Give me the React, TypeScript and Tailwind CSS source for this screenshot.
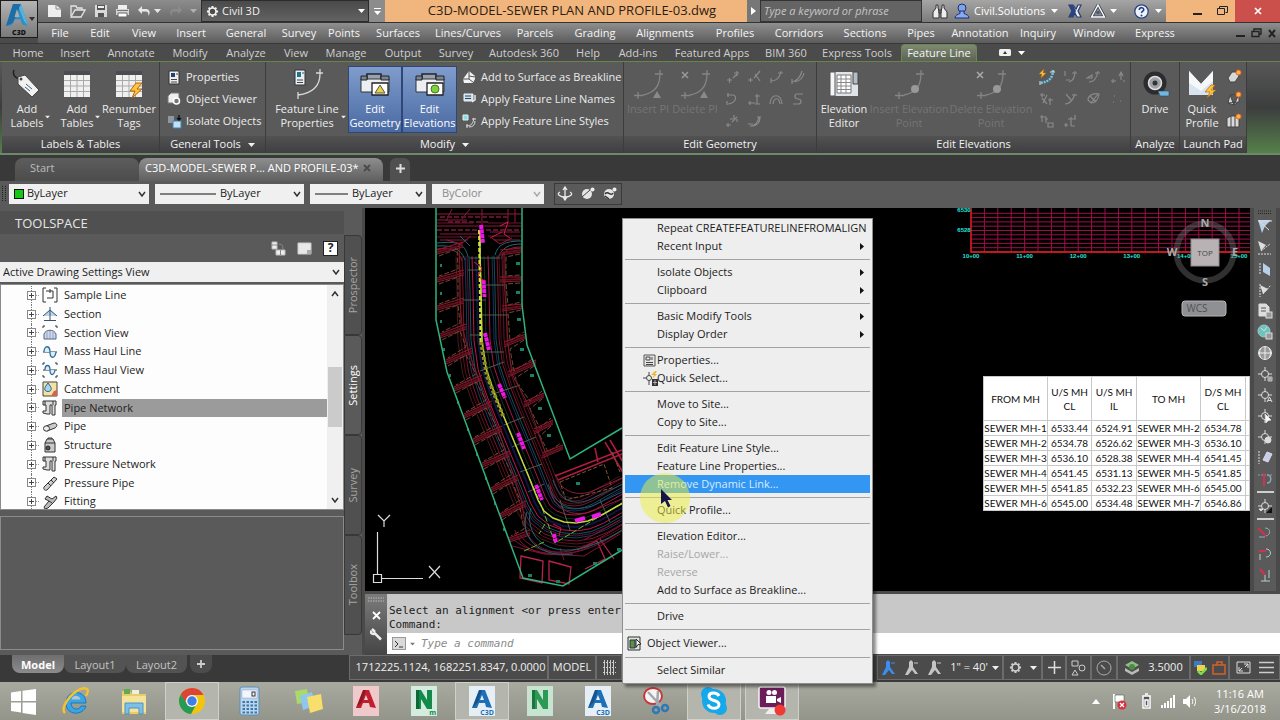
import type { ReactNode } from 'react';

type Pt = [number, number];

function Svg({ w, h, vb, className, children }: { w: number; h: number; vb?: string; className?: string; children: ReactNode }) {
  return (
    <svg width={w} height={h} viewBox={vb ?? `0 0 ${w} ${h}`} fill="none" className={`shrink-0 ${className ?? ''}`} aria-hidden="true">
      {children}
    </svg>
  );
}

function Down({ className }: { className?: string }) {
  return (
    <Svg w={7} h={4} className={className}>
      <path d="M0 0h7L3.500 4z" fill="currentColor" />
    </Svg>
  );
}

/* ---------- Title bar and menus ---------- */

function AppLogo() {
  return (
    <button aria-label="Application menu" className="relative h-[38px] w-[38px] shrink-0 border border-[#1c1c1c] bg-gradient-to-b from-[#b4b4b4] to-[#7a7a7a]">
      <Svg w={36} h={36}>
        <path d="M5 25 12 3h8l7 22-6-1.500-1.500-5h-7l-2 6z" fill="#2f8fc6" />
        <path d="M12 3h8l-2 5-6 14-7 3z" fill="#1f6da6" />
        <path d="M16 8l2.500 8h-5z" fill="#a9adb0" />
        <path d="M20 3l7 22-4-5-5-13z" fill="#56b4dc" />
        <path d="M28 16h6l-3 4z" fill="#402a2a" />
        <text x="18" y="34" textAnchor="middle" fontSize="7" fontWeight="800" fontFamily="Open Sans" fill="#111">C3D</text>
      </Svg>
    </button>
  );
}

function QuickAccess() {
  return (
    <div className="flex w-[163px] shrink-0 items-center justify-between pl-[9px] pr-1 text-[#e8e8e8]">
      <button aria-label="New"><Svg w={15} h={14}><path d="M1 1h8l5 4v8H1z" fill="#eee" /><path d="M9 1v4h5" stroke="#888" /></Svg></button>
      <button aria-label="Open"><Svg w={17} h={14}><path d="M2 12V2h5l1 2h5v3" stroke="#e5e5e5" strokeWidth="1.300" /><path d="M2 13 6 6h10l-4 7z" fill="#6c6c6c" stroke="#e5e5e5" strokeWidth="1.300" /></Svg></button>
      <button aria-label="Save"><Svg w={14} h={14}><path d="M1 1h12v12H1z" fill="#d9d9d9" /><path d="M3 1h8v5H3zM4 9h6v4H4z" fill="#555" /><path d="M4 2h6v2H4z" fill="#eee" /></Svg></button>
      <button aria-label="Plot"><Svg w={15} h={14}><path d="M3 1h9v4H3z" fill="#eee" /><path d="M1 5h13v6H1z" fill="#d5d5d5" /><path d="M3 9h9v4H3z" fill="#fff" stroke="#666" /><path d="M2 6.500h11" stroke="#777" /></Svg></button>
      <button aria-label="Undo"><Svg w={14} h={12}><path d="M5 1 1 5l4 4V6.500h4c2 0 2.500 1.500 2.500 4.500 2-3 1.500-7-2.500-7H5z" fill="#e8e8e8" /></Svg></button>
      <Down className="-ml-1" />
      <button aria-label="Redo"><Svg w={14} h={12}><path d="M9 1l4 4-4 4V6.500H5c-2 0-2.500 1.500-2.500 4.500-2-3-1.500-7 2.500-7h4z" fill="#8c8c8c" /></Svg></button>
      <Down className="text-[#b0b0b0]" />
    </div>
  );
}

function GearIcon({ size, color }: { size: number; color: string }) {
  return (
    <Svg w={size} h={size} vb="0 0 14 14">
      <path d="M7 1v12M1 7h12M2.800 2.800l8.400 8.400M11.200 2.800l-8.400 8.400" stroke={color} strokeWidth="2.200" />
      <circle cx="7" cy="7" r="3.800" fill="#4c4c4c" stroke={color} strokeWidth="1.800" />
    </Svg>
  );
}

function TitleBar() {
  return (
    <div className="flex h-[23px] items-stretch border-b border-[#333] bg-gradient-to-b from-[#8d8d8d] to-[#6a6a6a]">
      <QuickAccess />
      <div className="relative flex w-[168px] shrink-0 items-center border border-[#2c2c2c] bg-gradient-to-b from-[#4a4a4a] to-[#626262] text-white">
        <div className="pointer-events-none absolute left-1"><GearIcon size={13} color="#f2f2f2" /></div>
        <select aria-label="Workspace" className="h-full w-full appearance-none bg-transparent pl-5 text-[11px] text-[#f0f0f0]"><option>Civil 3D</option></select>
        <Down className="pointer-events-none absolute right-[3px]" />
      </div>
      <button aria-label="Customize" className="flex w-4 shrink-0 flex-col items-center justify-center gap-[2px] bg-[#8c8c8c] text-white"><span className="h-px w-[7px] bg-white" /><Down /></button>
      <h1 className="flex min-w-0 flex-1 items-center justify-center whitespace-nowrap bg-[#f1b57e] pl-3 text-[13px] text-[#2c1d10]">C3D-MODEL-SEWER PLAN AND PROFILE-03.dwg</h1>
      <button aria-label="Collapse search" className="flex w-[13px] shrink-0 items-center justify-center bg-[#777]"><Svg w={5} h={8}><path d="M0 0l5 4-5 4z" fill="#fff" /></Svg></button>
      <input aria-label="Search" placeholder="Type a keyword or phrase" className="w-[162px] shrink-0 border border-[#333] bg-[#646464] pl-[3px] text-[11px] italic text-[#c9c9c9] placeholder:text-[#c4c4c4]" />
      <div className="flex w-[244px] shrink-0 items-center bg-gradient-to-b from-[#a5a5a5] to-[#7b7b7b] pl-[10px] text-[11px] text-white">
        <button aria-label="Find"><Svg w={16} h={15}><path d="M4 1h2v3l1 3v7H1V8l3-4zM10 1h2v3l3 4v6H9V7l1-3zM7 6h2v3H7z" fill="#eee" stroke="#333" /></Svg></button>
        <button className="ml-[6px] flex items-center gap-1">
          <Svg w={16} h={16}><circle cx="8" cy="5" r="4" fill="#7ea4e8" stroke="#1a3379" /><path d="M1 15c0-3 3-3.500 5-4.500V8h4v2.500c2 1 5 1.500 5 4.500z" fill="#88aaf0" stroke="#1a3379" /></Svg>
          Civil.Solutions
        </button>
        <Down className="ml-[6px]" />
        <button aria-label="Exchange" className="ml-[10px]"><Svg w={14} h={14}><path d="M1 1h4l3 4 2-4h3l-3 6 3 6H9L7 9l-2 4H1l3-6z" fill="#e9edf6" stroke="#2a3d70" strokeWidth="1.200" /><path d="M1 1h4l3 6-3 6H1l3-6z" fill="#2b4382" /></Svg></button>
        <button aria-label="Stay connected" className="ml-2"><Svg w={16} h={14}><path d="M8 1l6.500 12h-13z" stroke="#3d4659" strokeWidth="3" /><path d="M8 1l6.500 12h-13z" stroke="#fff" strokeWidth="1.400" /><circle cx="8" cy="8.500" r="1.800" fill="#4b5870" /></Svg></button>
        <Down className="ml-1" />
        <button aria-label="Help" className="ml-[17px]"><Svg w={15} h={15}><circle cx="7.500" cy="7.500" r="6.700" fill="#eef2fb" stroke="#2b447f" strokeWidth="1.300" /><path d="M5.300 6c0-3.200 4.800-3 4.400 0-.2 1.200-2.200 1.400-2.200 3" stroke="#223f8c" strokeWidth="1.600" /><circle cx="7.500" cy="11.500" r="1" fill="#223f8c" /></Svg></button>
        <Down className="ml-[6px]" />
      </div>
      <div className="flex w-[69px] shrink-0 items-center justify-end gap-[15px] bg-[#f1b57e] pr-[7px]">
        <button aria-label="Minimize"><Svg w={9} h={10}><path d="M0 8h9" stroke="#222" strokeWidth="2" /></Svg></button>
        <button aria-label="Restore"><Svg w={11} h={10}><path d="M2.500 2.500V.5h8v6h-2M.5 2.500h7v6h-7z" stroke="#222" /></Svg></button>
      </div>
      <button aria-label="Close" className="flex w-[45px] shrink-0 items-center justify-center bg-[#cb504c]"><Svg w={8} h={8}><path d="M1 1l6 6M7 1L1 7" stroke="#fff" strokeWidth="1.600" /></Svg></button>
    </div>
  );
}

const menus: [string, string][] = [
  ['File', 'w-[40px]'], ['Edit', 'w-[40px]'], ['View', 'w-[48px]'], ['Insert', 'w-[46px]'], ['General', 'w-[64px]'],
  ['Survey', 'w-[42px]'], ['Points', 'w-[48px]'], ['Surfaces', 'w-[60px]'], ['Lines/Curves', 'w-[80px]'], ['Parcels', 'w-[54px]'],
  ['Grading', 'w-[66px]'], ['Alignments', 'w-[74px]'], ['Profiles', 'w-[66px]'], ['Corridors', 'w-[62px]'], ['Sections', 'w-[70px]'],
  ['Pipes', 'w-[42px]'], ['Annotation', 'w-[76px]'], ['Inquiry', 'w-[40px]'], ['Window', 'w-[72px]'], ['Express', 'w-[50px]'],
];

function MenuBar() {
  return (
    <nav className="flex h-[20px] items-center bg-gradient-to-b from-[#8f8f8f] to-[#5c5c5c] pl-[2px] text-[11px] leading-4 text-[#f4f4f4]">
      {menus.map(([label, w]) => (
        <button key={label} className={`${w} shrink-0 whitespace-nowrap text-center`}>{label}</button>
      ))}
      <div className="ml-auto flex items-center gap-[6px] pr-1 text-[#222]">
        <button aria-label="Minimize drawing"><Svg w={9} h={9}><path d="M0 7h9" stroke="#222" strokeWidth="2" /></Svg></button>
        <button aria-label="Restore drawing"><Svg w={11} h={10}><path d="M3 3V1h7v5H8M1 3.500h7v5H1z" stroke="#222" strokeWidth="1.400" /></Svg></button>
        <button aria-label="Close drawing"><Svg w={8} h={9}><path d="M1 1l6 7M7 1L1 8" stroke="#222" strokeWidth="2" /></Svg></button>
      </div>
    </nav>
  );
}

const tabs: [string, string][] = [
  ['Home', 'w-[40px]'], ['Insert', 'w-[54px]'], ['Annotate', 'w-[58px]'], ['Modify', 'w-[60px]'], ['Analyze', 'w-[52px]'],
  ['View', 'w-[48px]'], ['Manage', 'w-[52px]'], ['Output', 'w-[62px]'], ['Survey', 'w-[44px]'], ['Autodesk 360', 'w-[92px]'],
  ['Help', 'w-[36px]'], ['Add-ins', 'w-[64px]'], ['Featured Apps', 'w-[84px]'], ['BIM 360', 'w-[64px]'], ['Express Tools', 'w-[78px]'],
];

function RibbonTabs() {
  return (
    <div className="flex h-[19px] items-stretch border-b border-[#67854b] border-t border-t-[#383838] bg-[#4b4b4b] pl-2 text-[11px] leading-4 text-[#cfcfcf]">
      {tabs.map(([label, w]) => (
        <button key={label} className={`${w} shrink-0 whitespace-nowrap text-center`}>{label}</button>
      ))}
      <button className="ml-[5px] w-[76px] shrink-0 whitespace-nowrap rounded-t-sm border border-b-0 border-[#6d8456] bg-gradient-to-b from-[#7d8a70] to-[#5d6357] text-center text-[#f4f4f4]">Feature Line</button>
      <button aria-label="Minimize ribbon" className="ml-[22px] flex items-center gap-[7px] text-white">
        <Svg w={12} h={7}><rect width="12" height="7" rx="1.500" fill="#f0f0f0" /><path d="M4 5l2-3 2 3z" fill="#333" /></Svg>
        <Down />
      </button>
    </div>
  );
}

/* ---------- Ribbon ---------- */

function Big({ icon, l1, l2, w, on, off, arrow }: { icon: ReactNode; l1: string; l2?: string; w: string; on?: boolean; off?: boolean; arrow?: boolean }) {
  return (
    <button
      disabled={off}
      className={`${w} relative flex h-[67px] shrink-0 flex-col items-center whitespace-nowrap border pt-px text-[11px] leading-[14px] ${on ? 'border-[#2e4778] bg-gradient-to-b from-[#7f9ccb] to-[#4a6aa3] text-white' : off ? 'border-transparent text-[#757575]' : 'border-transparent text-[#ececec]'}`}
    >
      <span className="mb-[2px] flex h-8 items-center justify-center">{icon}</span>
      <span>{l1}</span>
      <span>{l2}</span>
      {arrow && <Down className="absolute bottom-[13px] right-0 scale-75" />}
    </button>
  );
}

function Row({ icon, children }: { icon: ReactNode; children: ReactNode }) {
  return (
    <button className="flex h-[22px] items-center gap-[3px] whitespace-nowrap text-[11px] text-[#ececec]">
      <span className="flex w-[18px] justify-center">{icon}</span>
      {children}
    </button>
  );
}

function Panel({ title, w, arrow, children }: { title: string; w: string; arrow?: boolean; children: ReactNode }) {
  return (
    <section className={`${w} flex shrink-0 flex-col border-r border-[#3c3c3c] bg-[#5a5a5a] pt-1`}>
      <div className="flex h-[70px]">{children}</div>
      <div className="flex h-[17px] items-center justify-center gap-[7px] whitespace-nowrap bg-gradient-to-b from-[#525252] to-[#3f3f42] text-[11px] text-[#f2f2f2]">
        {title}
        {arrow && <Down />}
      </div>
    </section>
  );
}

const TagIcon = (
  <Svg w={30} h={30}>
    <path d="M2 1c-2 5 2 9 6 8" stroke="#222" strokeWidth="1.500" />
    <path d="M6 8l7-2 14 15-7 7L6 15z" fill="#f1f1f1" stroke="#444" />
    <circle cx="9" cy="10" r="1.500" fill="#444" />
    <path d="M14 15l6 5M13 18l5 4" stroke="#467" />
  </Svg>
);

function TableIcon({ bolt }: { bolt?: boolean }) {
  return (
    <Svg w={30} h={30}>
      <path d="M2 2h26v26H2z" fill="#f0f0f0" />
      <path d="M2 2h26v4H2z" fill="#4a4c52" />
      <path d="M2 11.500h26M2 17h26M2 22.500h26M8.500 6v22M15 6v22M21.500 6v22" stroke="#a9a9a9" />
      {bolt && <path d="M22 14l-6 8h5l-3 7 10-9h-5l5-6z" fill="#ffc53d" stroke="#b8650c" />}
    </Svg>
  );
}

const CurveIcon = ({ color = '#ddd', size = 30, mark }: { color?: string; size?: number; mark?: ReactNode }) => (
  <Svg w={size} h={size} vb="0 0 30 30">
    <path d="M27 1v4c0 12-6 19-17 21M22 5h8M5 23v7M1 26.500h9" stroke={color} strokeWidth="1.300" />
    {mark}
  </Svg>
);

function CaseIcon({ shape }: { shape: 'tri' | 'dot' }) {
  return (
    <Svg w={32} h={28}>
      <path d="M8 9V4h14v5" fill="#9aa3ad" stroke="#22252b" strokeWidth="1.500" />
      <path d="M2 9h28v13H2z" fill="#eceff2" stroke="#30343a" />
      <path d="M2 6h6v4H2zM22 6h8v4h-8z" fill="#7c858f" stroke="#22252b" />
      <path d="M13 13h16v12H13z" fill="#fff" stroke="#222" strokeWidth="1.300" />
      {shape === 'tri' ? <path d="M21 15l5 8H16z" fill="#e8d33b" stroke="#555" /> : <circle cx="21" cy="19" r="4" fill="#7dd03e" stroke="#447a20" />}
    </Svg>
  );
}

const MagnetTri = <path d="M24 22l4 7h-8z" fill="#8a8a8a" />;

const smallShapes = [
  'M2 10h5M4.500 8v5M8 8l4-4M12 1v5M9 3h5',
  'M1 10h5M3.500 8v4M13 1L7 8M8 4l5 7',
  'M2 11c6 0 9-4 10-10M9 3h5M2 8v5',
  'M1 12C6 11 9 8 11 1M4 12c4-1 8-4 9-9M1 9v5',
  'M2 3h6c4 0 4 8-5 9M3 1v4M2 9v4',
  'M1 11h7M10 2v10M8 4h5M3 9v4M8 12h5',
  'M1 12C2 1 12 1 13 12M4 12C5 5 10 5 11 12',
  'M12 2H6C3 2 3 7 7 7s4 5 0 5H2',
  'M1 11h5M3 9v4M7 8l5-5M9 1v4M12 5v3M5 5h3',
  'M3 12c6 0 8-4 9-9M6 12c5-1 7-5 7-9M1 10h5M10 3h4',
];

function Small({ d, color = '#8a8a8a', label }: { d: string; color?: string; label: string }) {
  return (
    <button aria-label={label} disabled className="flex h-[22px] items-center justify-center">
      <Svg w={15} h={14}><path d={d} stroke={color} strokeWidth="1.200" /></Svg>
    </button>
  );
}

function Ribbon() {
  return (
    <div className="flex h-[93px] border-b-2 border-[#70886a] bg-gradient-to-b from-[#575757] via-[#3c3e3d] to-[#55804a] pl-[2px]">
      <Panel title="Labels & Tables" w="w-[158px]">
        <Big w="w-[50px]" icon={TagIcon} l1="Add" l2="Labels" arrow />
        <Big w="w-[50px]" icon={<TableIcon />} l1="Add" l2="Tables" arrow />
        <Big w="w-[54px]" icon={<TableIcon bolt />} l1="Renumber" l2="Tags" />
      </Panel>
      <Panel title="General Tools" w="w-[106px]" arrow>
        <div className="flex flex-col pl-[5px]">
          <Row icon={<Svg w={12} h={15}><path d="M1 1h10v13H1z" fill="#eee" stroke="#333" /><path d="M3 3h4v4H3z" fill="#24406f" /><path d="M8 4h2M3 9.500h6M3 12h6" stroke="#444" /></Svg>}>Properties</Row>
          <Row icon={<Svg w={14} h={14}><path d="M1 4l3-3h8v7l-3 3H1z" fill="#eee" stroke="#777" /><circle cx="9.500" cy="9" r="3" fill="#777" stroke="#fff" strokeWidth="1.500" /></Svg>}>Object Viewer</Row>
          <Row icon={<Svg w={15} h={15}><path d="M1 2h6v7H1z" fill="#8f98a0" /><path d="M6 7h8v7H6z" fill="#c2e1f5" stroke="#3e83b0" /><path d="M12 1v5M10 4l2 2 2-2" stroke="#111" strokeWidth="1.400" /></Svg>}>Isolate Objects</Row>
        </div>
      </Panel>
      <Panel title="Modify" w="w-[358px]" arrow>
        <Big w="w-[82px]" arrow l1="Feature Line" l2="Properties" icon={
          <Svg w={32} h={32}>
            <path d="M4 2h10v15H4z" fill="#e8eef2" stroke="#30343a" /><path d="M6 4h4v5H6z" fill="#25738a" /><path d="M11 5h2M6 12h6M6 14.500h6" stroke="#444" />
            <path d="M29 1v5c0 12-7 19-22 21M25 5h7M7 24v7" stroke="#d8d8d8" strokeWidth="1.300" />
          </Svg>} />
        <Big w="w-[54px]" on l1="Edit" l2="Geometry" icon={<CaseIcon shape="tri" />} />
        <Big w="w-[55px]" on l1="Edit" l2="Elevations" icon={<CaseIcon shape="dot" />} />
        <div className="flex flex-col pl-[3px]">
          <Row icon={<Svg w={14} h={14}><path d="M7 1l6 5v3l-2 4H2L1 9z" fill="#f3f3f3" /><path d="M7 1v8M7 9l-6 0M7 9l5 4M7 6l6 1" stroke="#555" /></Svg>}>Add to Surface as Breakline</Row>
          <Row icon={<Svg w={13} h={13}><path d="M1 1h9v7H1z" fill="#c6e3f3" stroke="#eee" /><path d="M2 3h6M2 5.500h6" stroke="#345" /><path d="M9 9l3-2V2" stroke="#eee" strokeWidth="1.400" /></Svg>}>Apply Feature Line Names</Row>
          <Row icon={<Svg w={15} h={15}><path d="M1 1h5v5H1z" fill="#7fe0e8" stroke="#eee" /><path d="M4 12c6 0 7-3 8-8M10 5h4M5 10v4M7 13c4 0 6-2 6-6" stroke="#ddd" /></Svg>}>Apply Feature Line Styles</Row>
        </div>
      </Panel>
      <Panel title="Edit Geometry" w="w-[193px]">
        <Big w="w-[48px]" off l1="Insert PI" icon={<CurveIcon color="#858585" mark={MagnetTri} />} />
        <Big w="w-[46px]" off l1="Delete PI" icon={<CurveIcon color="#858585" mark={<><path d="M2 3l6 6M8 3L2 9" stroke="#999" strokeWidth="1.500" />{MagnetTri}</>} />} />
        <div className="grid h-[66px] w-[92px] grid-cols-4 pl-[3px]">
          {smallShapes.map((d, i) => <Small key={d} d={d} label={`Geometry tool ${i + 1}`} />)}
        </div>
      </Panel>
      <Panel title="Edit Elevations" w="w-[314px]">
        <Big w="w-[54px]" l1="Elevation" l2="Editor" icon={
          <Svg w={30} h={28}><path d="M1 2h28v24H1z" fill="#dfe4e8" /><path d="M1 2h5v24H1z" fill="#f7f7f7" stroke="#555" /><path d="M8 5h14v18H8z" fill="#fff" stroke="#777" /><path d="M8 9h14M8 12.500h14M8 16h14M8 19.500h14M12 5v18M17 5v18" stroke="#888" /><path d="M24 2h5v12h-5z" fill="#b5bec6" stroke="#444" /></Svg>} />
        <Big w="w-[76px]" off l1="Insert Elevation" l2="Point" icon={<CurveIcon color="#858585" mark={<circle cx="21" cy="20" r="4" fill="#999" />} />} />
        <Big w="w-[88px]" off l1="Delete Elevation" l2="Point" icon={<CurveIcon color="#858585" mark={<><circle cx="21" cy="20" r="4" fill="#999" /><path d="M1 3l6 6M7 3L1 9" stroke="#aaa" strokeWidth="1.500" /></>} />} />
        <div className="grid h-[66px] w-[94px] grid-cols-4">
          <button aria-label="Quick elevation edit" className="flex items-center justify-center">
            <Svg w={17} h={16}><path d="M15 1c0 8-4 12-13 13" stroke="#6fc7ee" strokeWidth="2.500" strokeDasharray="2 1" /><path d="M2 12v4M12 3h5" stroke="#ddd" /><path d="M6 0L1 5h3L3 9l5-5H5z" fill="#ffc53d" stroke="#c46d12" strokeWidth=".6" /></Svg>
          </button>
          {['M2 1v5M6 12c4-1 6-4 6-11M9 3h5M3 10h4', 'M1 8l5-3v3zM3 12c6 0 8-5 9-11M9 3h5', 'M1 11h5M3 9v4M11 2v8M13 11h2M9 6l2-4 2 4',
            'M1 3h5M3 1v4M3 6l5 6M8 3l-4 8M11 6v7M9 8h5', 'M3 2l5 6M2 12c5 0 8-4 10-10M9 3h5', 'M2 8c0-6 8-7 11-6-1 6-4 9-8 9zM5 11L12 2M4 4l6 6', 'M4 4h1M10 9h1M3 10h1',
            'M3 1v7M1 3h6v6M6 5h3M9 9h5v4H9z', 'M8 3v9M5 5h8M12 1v4M1 11h4M3 9v4M8 12h4'].map((d, i) => (
            <Small key={d} d={d} label={`Elevation tool ${i + 2}`} />
          ))}
        </div>
      </Panel>
      <Panel title="Analyze" w="w-[49px]">
        <Big w="w-[48px]" l1="Drive" icon={
          <Svg w={30} h={30}><circle cx="15" cy="14" r="9" stroke="#2c2c2e" strokeWidth="5" /><circle cx="15" cy="14" r="6.500" fill="#9da2a6" stroke="#e0e0e0" strokeWidth="1.500" /><circle cx="15" cy="14" r="2.500" fill="#333" /><path d="M18 22h11v5h-9z" fill="#6fb8e4" stroke="#345" strokeWidth=".6" /></Svg>} />
      </Panel>
      <Panel title="Launch Pad" w="w-[67px]">
        <Big w="w-[44px]" l1="Quick" l2="Profile" icon={
          <Svg w={30} h={30}><path d="M2 2l12 13L26 2v24H2z" fill="#d9e2ef" /><path d="M2 2l12 13L26 2v10L14 22 2 14z" fill="#f5f8fb" /><path d="M24 16l-6 7h5l-3 6 9-8h-5l4-5z" fill="#ffc53d" stroke="#b8650c" strokeWidth=".7" /></Svg>} />
        <div className="flex flex-col">
          {['M2 9l4-6h6l1 4-4 6H4z', 'M2 12L4 4l9-1v8l-5 3zM4 4l4 10 5-11M2 12l11-1', 'M1 14V5l4-2h8v11zM5 3v11M9 3v11'].map((d) => (
            <button key={d} aria-label="Create object" className="flex h-[22px] w-[20px] items-center justify-center">
              <Svg w={16} h={16}><path d={d} fill="#d8d8d8" stroke="#444" /><circle cx="12.500" cy="3.500" r="2.500" fill="#ffb04a" stroke="#e4671c" /></Svg>
            </button>
          ))}
        </div>
      </Panel>
    </div>
  );
}

/* ---------- Drawing tabs and property bar ---------- */

function DrawingTabs() {
  return (
    <div className="flex h-[26px] items-end bg-[#393939] pl-[15px] text-[11px]">
      <button className="flex h-[23px] w-[124px] items-center rounded-t-lg bg-gradient-to-b from-[#5d5d5d] to-[#4c4c4c] pb-[3px] pl-[15px] text-[#bcbcbc]">Start</button>
      <div className="flex h-[23px] w-[244px] items-center justify-between rounded-t-lg bg-gradient-to-b from-[#8e8e8e] to-[#606060] pb-[3px] pl-[6px] pr-3 text-white">
        <button className="whitespace-nowrap">C3D-MODEL-SEWER P... AND PROFILE-03*</button>
        <button aria-label="Close tab"><Svg w={8} h={8}><path d="M1 1l6 6M7 1L1 7" stroke="#4a4a4a" strokeWidth="1.800" /></Svg></button>
      </div>
      <button aria-label="New tab" className="ml-[7px] flex h-[23px] w-[20px] items-center justify-center rounded-t-md bg-[#505050] pb-[3px]">
        <Svg w={9} h={9}><path d="M4.500 0v9M0 4.500h9" stroke="#ddd" strokeWidth="2" /></Svg>
      </button>
    </div>
  );
}

function Chevron({ color = '#333', up }: { color?: string; up?: boolean }) {
  return <Svg w={8} h={6}><path d={up ? 'M1 5l3-4 3 4' : 'M1 1l3 4 3-4'} stroke={color} strokeWidth="1.500" /></Svg>;
}

function Combo({ w, label, value, lead, pad, off }: { w: string; label: string; value: string; lead?: ReactNode; pad: string; off?: boolean }) {
  return (
    <div className={`${w} relative flex h-[20px] shrink-0 items-center bg-[#f0f0f0]`}>
      <div className="pointer-events-none absolute left-[5px] flex">{lead}</div>
      <select aria-label={label} disabled={off} className={`${pad} h-full w-full appearance-none bg-transparent text-[11px] ${off ? 'text-[#8b8b8b]' : 'text-[#1c1c1c]'}`}><option>{value}</option></select>
      <div className="pointer-events-none absolute right-[3px]"><Chevron color={off ? '#aaa' : '#333'} /></div>
    </div>
  );
}

function Grip() {
  return <Svg w={6} h={16}><path d="M1.500 0v16M4.500 0v16" stroke="#1f1f1f" strokeDasharray="1 1" /></Svg>;
}

function PropertyBar() {
  return (
    <div className="flex h-[27px] items-center gap-[6px] bg-[#5a5a5a] pb-[2px]">
      <div className="-mr-[4px] ml-px flex"><Grip /></div>
      <Combo w="w-[140px]" label="Color" value="ByLayer" pad="pl-[18px]" lead={<Svg w={10} h={10}><rect x=".5" y=".5" width="9" height="9" fill="#14c814" stroke="#111" /></Svg>} />
      <Combo w="w-[149px]" label="Linetype" value="ByLayer" pad="pl-[65px]" lead={<Svg w={56} h={2}><path d="M0 1h56" stroke="#111" /></Svg>} />
      <Combo w="w-[116px]" label="Lineweight" value="ByLayer" pad="pl-[42px]" lead={<Svg w={33} h={2}><path d="M0 1h33" stroke="#111" /></Svg>} />
      <Combo w="w-[112px]" label="Plot style" value="ByColor" pad="pl-[10px]" off />
      <div className="ml-[4px] flex h-[22px] items-center gap-[8px] border border-[#3a3a3a] pl-[2px] pr-1">
        <button aria-label="3D orbit"><Svg w={16} h={15}><path d="M8 1v13M6 4l2-3 2 3M6 11l2 3 2-3" stroke="#eee" strokeWidth="1.300" /><path d="M3 6c-4 2 0 5 5 5s9-3 5-5" stroke="#eee" strokeWidth="1.300" /></Svg></button>
        <button aria-label="Free orbit"><Svg w={14} h={13}><ellipse cx="6" cy="7" rx="5" ry="5" fill="#e4e4e4" /><circle cx="11.500" cy="2.500" r="2" fill="#eee" /><path d="M1 10l8-7" stroke="#444" /></Svg></button>
        <button aria-label="Continuous orbit"><Svg w={14} h={13}><ellipse cx="6" cy="7" rx="5" ry="5" fill="#e4e4e4" /><circle cx="11.500" cy="2.500" r="2" fill="#eee" /><path d="M2 7c3-4 6 3 8-1M6 12l-4-3" stroke="#333" strokeWidth="1.500" /></Svg></button>
      </div>
    </div>
  );
}

/* ---------- Toolspace ---------- */

const pipeNet = 'M1 1h13v4h-1v10h-3V5H8v9H5l-4-1v-2h3V5H1zM3 1v4M11 1v4';

const treeItems: { name: string; icon: ReactNode; selected?: boolean }[] = [
  { name: 'Sample Line', icon: <path d="M4 1H1v14h3M12 1h3v14h-3M4 4h7v7H5M8 2v4" stroke="#333" /> },
  { name: 'Section', icon: <><path d="M1 10L8 4l7 6z" fill="#bcd3ea" /><path d="M8 1v13M1 10L8 4l7 6M2 14.500h12" stroke="#35536f" /></> },
  { name: 'Section View', icon: <><path d="M2 14V9c2-5 10-5 12 0v5z" fill="#c7d9ec" stroke="#567" /><path d="M5 7v7M8 6v8M11 7v7" stroke="#86a" strokeOpacity=".5" /><path d="M1 3V1h2M13 1h2v2" stroke="#333" /></> },
  { name: 'Mass Haul Line', icon: <><path d="M1 8h14" stroke="#333" /><path d="M2 8c0-7 6-7 6 0s5 7 6 0" fill="#d9ecf8" stroke="#2d6fa0" strokeWidth="1.300" /></> },
  { name: 'Mass Haul View', icon: <><path d="M1 8h14M1 3V1h2M13 1h2v2M1 13v2h2M13 15h2v-2" stroke="#333" /><path d="M3 8c0-6 5-6 5 0s4 6 5 0" fill="#d9ecf8" stroke="#2d6fa0" strokeWidth="1.300" /></> },
  { name: 'Catchment', icon: <><path d="M1 1h14v14H1z" fill="#f3e3a1" stroke="#444" /><path d="M9 15l3-5 3-1v6z" fill="#d66248" /><path d="M6 2c2 3 4 5 3 7s-5 2-6 0 1-4 3-7z" fill="#a7d4f2" stroke="#27618f" /></> },
  { name: 'Pipe Network', selected: true, icon: <path d={pipeNet} fill="#ddd" stroke="#333" /> },
  { name: 'Pipe', icon: <><path d="M4 7l8-3c3 0 4 3 1 5l-8 3z" fill="#c9c9c9" stroke="#333" /><ellipse cx="4.500" cy="9.500" rx="3" ry="2.700" fill="#eee" stroke="#333" /></> },
  { name: 'Structure', icon: <><path d="M3 6l2-4h6l2 4v9H3z" fill="#c9c9c9" stroke="#333" /><path d="M3 6h10M6 2V1h4v1" stroke="#333" /><circle cx="6" cy="11" r="2" fill="#555" stroke="#222" /></> },
  { name: 'Pressure Network', icon: <path d={pipeNet} fill="#ddd" stroke="#333" /> },
  { name: 'Pressure Pipe', icon: <><path d="M2 12L12 2l3 2L5 15c-2 1-4-1-3-3z" fill="#ccc" stroke="#333" /><path d="M6 8l3 3M9 5l3 3" stroke="#333" /></> },
  { name: 'Fitting', icon: <><path d="M2 13l5-6-4-2 2-3 5 3 4-3 1 2-3 4-6 6-3 1z" fill="#bbb" stroke="#333" /><path d="M7 7l3 2" stroke="#333" /></> },
];

function Toolspace() {
  return (
    <aside className="flex w-[365px] shrink-0 bg-[#5a5a5a]">
      <div className="flex min-w-0 flex-1 flex-col">
        <h2 className="mt-[3px] flex h-[23px] items-center bg-[#505050] pb-px pl-[15px] pt-1 text-[13px] text-[#e6e6e6]">TOOLSPACE</h2>
        <div className="flex h-[28px] items-center justify-end gap-[11px] pr-[6px]">
          <button aria-label="Item view"><Svg w={15} h={15}><path d="M1 1h5v7H1zM5 9h9v5H5z" fill="#eee" stroke="#bbb" /><path d="M1 4h5M9.500 9v5M8 3c3 0 4 2 4 5" stroke="#888" /></Svg></button>
          <button aria-label="Preview"><Svg w={15} h={13}><path d="M1 1h13v11H1z" fill="#e8e8e8" stroke="#ccc" /><path d="M10 8h4v4h-4z" fill="#aaa" /></Svg></button>
          <button aria-label="Toolspace help" className="flex h-[15px] w-[15px] items-center justify-center border border-[#222] bg-white text-[12px] font-bold leading-3 text-[#222]">?</button>
        </div>
        <div className="relative flex h-[20px] items-center bg-[#f0f0f0]">
          <select aria-label="View" className="h-full w-full appearance-none bg-transparent pl-[3px] text-[11px] text-[#1c1c1c]"><option>Active Drawing Settings View</option></select>
          <div className="pointer-events-none absolute right-[4px]"><Chevron /></div>
        </div>
        <div className="mt-[2px] flex h-[226px] overflow-hidden border border-[#8b8b8b] bg-[#fdfdfd]">
          <ul className="mt-px grid h-[225px] flex-1 auto-rows-fr text-[12px] text-[#1e1e1e]">
            {treeItems.map((it) => (
              <li key={it.name} className="relative flex items-center pl-[26px]">
                <span className="absolute bottom-0 left-[30px] top-0 border-l border-dotted border-[#777]" />
                <Svg w={13} h={9} className="relative"><rect x=".5" y=".5" width="8" height="8" fill="#fff" stroke="#888" /><path d="M2 4.500h5M4.500 2v5" stroke="#444" /><path d="M9 4.500h4" stroke="#999" strokeDasharray="1 1" /></Svg>
                <Svg w={16} h={16} className="ml-[2px]">{it.icon}</Svg>
                <span className={`ml-[4px] flex h-[18px] flex-1 items-center whitespace-nowrap pl-[2px] text-[11px] ${it.selected ? 'bg-[#9b9b9b]' : ''}`}>{it.name}</span>
              </li>
            ))}
          </ul>
          <div className="flex w-[16px] flex-col items-center bg-[#f0f0f0] py-[6px]">
            <Chevron up />
            <span className="mt-[70px] h-[60px] w-[14px] bg-[#cbcbcb]" />
            <span className="mt-auto"><Chevron /></span>
          </div>
        </div>
        <div className="mt-[6px] flex-1 border border-[#8b8b8b] bg-[#5a5a5a]" />
        <div className="h-[5px]" />
      </div>
      <div className="flex w-[21px] flex-col border-r-[3px] border-[#4a4a4a] pt-[27px] text-[11px] leading-4">
        {['Prospector', 'Settings', 'Survey', 'Toolbox'].map((t) => (
          <button key={t} className={`flex h-[100px] items-center justify-center rounded-r-[4px] border border-[#383838] ${t === 'Settings' ? 'bg-[#5a5a5a] text-white' : 'bg-[#505050] text-[#a5a5a5]'}`}>
            <span className="rotate-180 [writing-mode:vertical-rl]">{t}</span>
          </button>
        ))}
      </div>
    </aside>
  );
}

/* ---------- Drawing canvas ---------- */

const spine: Pt[] = [
  [480, 232], [480, 256], [481, 290], [482, 340], [486, 368], [494, 392], [504, 417], [516, 446], [528, 475], [538, 500],
  [544, 511], [553, 518], [564, 522], [576, 523], [588, 521], [600, 516], [614, 508], [632, 498],
];

function offset(points: Pt[], d: number): Pt[] {
  return points.map((p, i) => {
    const a = points[Math.max(0, i - 1)];
    const b = points[Math.min(points.length - 1, i + 1)];
    const dx = b[0] - a[0];
    const dy = b[1] - a[1];
    const len = Math.hypot(dx, dy);
    return [p[0] + (dy / len) * d, p[1] - (dx / len) * d];
  });
}

const toPath = (pts: Pt[]) => 'M' + pts.map((p) => `${p[0].toFixed(1)} ${p[1].toFixed(1)}`).join('L');

const roadLines: [number, string, number][] = [
  [-25, '#3c1a1c', 1], [-22, '#6c1224', 1], [-19, '#4c1020', 1], [-17, '#7c1628', 1], [-14, '#1a4c58', 1], [-12, '#18305c', 1], [-8, '#a81648', 1], [-4, '#16301f', 1],
  [4, '#101440', 2], [8, '#c01850', 1], [11, '#1a565c', 1], [13, '#5c1438', 1], [15, '#183c5c', 1], [18, '#7c1628', 1], [21, '#5a101e', 1], [24, '#4c1a1c', 1],
];

const leftLots: [Pt, Pt][] = [
  [[437, 252], [463, 244]], [[437, 280], [464, 272]], [[437, 308], [464, 300]], [[440, 336], [466, 326]], [[446, 362], [472, 350]],
  [[454, 389], [482, 377]], [[464, 416], [492, 403]], [[473, 441], [502, 428]], [[482, 465], [510, 453]], [[491, 490], [518, 477]], [[500, 516], [526, 503]], [[509, 540], [530, 532]],
];
const rightLots: [Pt, Pt][] = [
  [[522, 250], [500, 252]], [[522, 279], [500, 279]], [[523, 306], [502, 308]], [[526, 336], [504, 344]], [[536, 362], [508, 374]],
  [[544, 395], [524, 404]], [[553, 422], [534, 431]], [[563, 447], [542, 455]],
];

function lotPath(lots: [Pt, Pt][], i: number) {
  const [a, b] = lots[i];
  const [c, d] = lots[i + 1];
  const s = Math.sign(b[0] - a[0]);
  return `M${a[0] + 2 * s} ${a[1] + 4}L${b[0] - 6 * s} ${b[1] + 5}L${d[0] - 6 * s} ${d[1] - 3}L${c[0] + 2 * s} ${c[1] - 4}`;
}

function SitePlan() {
  return (
    <g fill="none">
      <path d="M437 214h84M437 220h30M437 226h84M440 234h40M490 232h30M440 240h28M494 240h26M452 209l-6 12M470 209l-8 10M482 209v20M508 209v14M515 209v14" stroke="#8e1a38" />
      <path d="M440 217h70M437 230h85M448 222h40" stroke="#5a1628" strokeWidth="2" strokeDasharray="5 2" />
      <path d="M437 223h36M488 223h34M437 237h40M488 236h34" stroke="#6c1430" />
      <path d="M437 243c20-2 28 0 31 14M522 241c-18 0-24 4-27 14M437 246c14-1 24 2 28 14M522 244c-14 0-20 4-24 14M460 236l10 10" stroke="#226a72" />
      <path d="M437 249c14-2 22 2 25 12M522 247c-12 0-18 3-21 12M447 240l14 4 10-8M512 238l-12 6-8-6" stroke="#9c1a3c" />
      {roadLines.map(([d, c, w]) => (
        <path key={d} d={toPath(offset(spine.slice(1), -d))} stroke={c} strokeWidth={w} />
      ))}
      <path d="M470 258h30M468 270h14M478 285h26M462 300h24M482 315h26M470 335h14M480 352h24M480 371l24-9M490 395l30-10M504 425l20-8M512 447l24-10M520 472l22-8M528 492l16-8M560 500l10 30M600 500l10 22" stroke="#48604c" />
      {[leftLots, rightLots].map((lots, k) =>
        lots.map(([a, b], i) => (
          <g key={`${k}-${i}`}>
            <path d={`M${a[0]} ${a[1] - 2}L${b[0]} ${b[1] - 2}`} stroke="#8c182c" strokeWidth="1.200" />
            <path d={`M${a[0]} ${a[1]}L${b[0]} ${b[1] + 1}`} stroke="#5e1020" strokeWidth="2" />
            <path d={`M${a[0]} ${a[1] + 2}L${b[0]} ${b[1] + 3}`} stroke="#8c182c" />
            {i < lots.length - 1 && <path d={lotPath(lots, i)} stroke="#6f4c2e" strokeDasharray="5 2" />}
            {i < lots.length - 1 && <path d={`M${b[0] - (k ? -4 : 4)} ${b[1]}L${lots[i + 1][1][0] - (k ? -4 : 4)} ${lots[i + 1][1][1]}`} stroke="#861a2c" />}
            {i < lots.length - 1 && <rect x={a[0] + (k ? -6 : 3)} y={a[1] + 12} width={k ? 4 : 2} height="3" fill="#1f7f66" />}
          </g>
        )),
      )}
      <path d="M555 476l67-26M558 480l64-26M605 442l20 34M610 440l20 34M595 448l3 14" stroke="#b01c40" strokeWidth="1.500" />
      <path d="M560 482l44-18 8 24-46 12zM612 452l8 20" stroke="#7a5a34" strokeDasharray="4 2" />
      <path d="M521 556l22 5-1 22-22-5zM549 561l22 6-2 17-20-4zM577 550l20-9 8 18-20 10M600 539l14 20" stroke="#b8244a" strokeWidth="1.300" />
      <path d="M514 540c10 8 20 12 40 14M520 535c14 20 50 22 70 8M515 530c6 30 60 34 104 2M588 545l34-20M584 540l36-20M560 548l4 12M512 546l32 8 40 2 36-22M524 520c0 30 40 42 66 26" stroke="#7c1430" />
      <path d="M531 508c-6 20 6 44 40 42 20-2 40-12 60-26M527 512c-8 24 10 46 46 42" stroke="#1e6a78" />
      <path d="M553 480c6 20 20 26 36 20l34-16M548 484c8 24 24 28 44 22l30-14" stroke="#22586c" />
      <path d="M550 486c2 20 18 32 40 26l34-14M556 474c4 18 20 22 34 18l32-14" stroke="#961a3c" />
      <path d="M480 232L482 345L488 380L541 505L555 543L622 503M545 524l-6 10M524 551l20-9" stroke="#5fbf28" strokeDasharray="6 2" />
      <path d={toPath(spine)} stroke="#c3d63a" strokeWidth="1.500" />
      <path d="M479 230L480.500 342" stroke="#d3e038" strokeWidth="2" strokeDasharray="4 2" />
      <path d="M481 342l6 34 8 20 8 20" stroke="#8d8a1e" strokeWidth="4" strokeDasharray="3 2" />
      <path d="M481 225l2 18M483.500 280l1 17M485 333l4 17M499 384l6 14M518 433l6 16M536 485l6 15M554 534l2 9" stroke="#f016e8" strokeWidth="4" strokeDasharray="4 .6" />
      <path d="M575 521l10-3M592 517l9-3" stroke="#f016e8" strokeWidth="4" />
      <path d="M474 262l8 6-4 8 8 6M490 238l12-6M500 226l8-4-4 12 6 4M553 524l8 4-2 8" stroke="#d01c48" />
      <path d="M436 208V320L447 372L523 578L563 586L622 550M522 208V305L527 345L570 459L622 428" stroke="#2fb37c" strokeWidth="1.500" />
      {[[528, 576], [556, 582], [593, 564], [617, 550], [576, 484]].map(([x, y]) => <rect key={x} x={x} y={y - 2} width="4" height="3" fill="#1f7f66" />)}
    </g>
  );
}

function ProfileGrid() {
  const xs = Array.from({ length: 21 }, (_, i) => 971 + i * 13.400);
  const ys = Array.from({ length: 10 }, (_, i) => 252 - i * 4.300);
  return (
    <g>
      <path d={xs.map((x) => `M${x} 208V252`).join('') + ys.map((y) => `M971 ${y}H1250`).join('')} stroke="#9c1048" fill="none" />
      <path d="M971 208V252H1250" stroke="#e81c1c" strokeWidth="1.300" fill="none" />
      <g fill="#22e6dc" fontSize="6" fontWeight="700" fontFamily="Liberation Sans" textAnchor="middle">
        <text x="964" y="212">6530</text>
        <text x="964" y="232">6528</text>
        {['10+00', '11+00', '12+00', '13+00', '14+00', '15+00'].map((t, i) => (
          <text key={t} x={971 + i * 53.600} y="258">{t}</text>
        ))}
      </g>
    </g>
  );
}

function ViewCube() {
  return (
    <g fontFamily="Open Sans" textAnchor="middle">
      <circle cx="1205" cy="252" r="28.500" fill="none" stroke="#777" strokeOpacity=".4" strokeWidth="6" />
      <rect x="1191" y="239" width="28" height="27" fill="#b9b2b5" stroke="#8d8d8d" />
      <text x="1205" y="256" fontSize="8" fill="#444">TOP</text>
      <g fontSize="11" fontWeight="700" fill="#a9a9a9">
        <text x="1205" y="227">N</text><text x="1205" y="286">S</text><text x="1172" y="256">W</text><text x="1235" y="256">E</text>
      </g>
      <rect x="1182" y="301" width="44" height="15" rx="3" fill="#8f9093" stroke="#b5b5b5" />
      <text x="1197" y="312" fontSize="10" fill="#4f5053">WCS</text>
    </g>
  );
}

const sewer = [
  ['SEWER MH-1', '6533.44', '6524.91', 'SEWER MH-2', '6534.78'],
  ['SEWER MH-2', '6534.78', '6526.62', 'SEWER MH-3', '6536.10'],
  ['SEWER MH-3', '6536.10', '6528.38', 'SEWER MH-4', '6541.45'],
  ['SEWER MH-4', '6541.45', '6531.13', 'SEWER MH-5', '6541.85'],
  ['SEWER MH-5', '6541.85', '6532.23', 'SEWER MH-6', '6545.00'],
  ['SEWER MH-6', '6545.00', '6534.48', 'SEWER MH-7', '6546.86'],
];

const sewerHeads: [string, string?][] = [['FROM MH'], ['U/S MH', 'CL'], ['U/S MH', 'IL'], ['TO MH'], ['D/S MH', 'CL'], ['']];

function SewerTable() {
  return (
    <table className="absolute left-[618px] top-[168px] w-[267px] table-fixed border-collapse bg-white text-center font-['Lato'] text-[10px] leading-[14px] text-[#111]">
      <colgroup><col className="w-[64px]" /><col className="w-[44px]" /><col className="w-[45px]" /><col className="w-[64px]" /><col className="w-[45px]" /><col /></colgroup>
      <thead>
        <tr className="h-[44px]">
          {sewerHeads.map(([a, b], i) => (
            <th key={i} className="whitespace-nowrap border border-[#c9c9c9] p-0 font-normal">{a}{b && <><br />{b}</>}</th>
          ))}
        </tr>
      </thead>
      <tbody>
        {sewer.map((r) => (
          <tr key={r[0]} className="h-[15px]">
            {r.map((c, i) => <td key={i} className="whitespace-nowrap border border-[#c9c9c9] p-0">{c}</td>)}
            <td className="border border-[#c9c9c9] p-0" />
          </tr>
        ))}
      </tbody>
    </table>
  );
}

function Canvas() {
  return (
    <main className="relative min-w-0 flex-1 overflow-hidden bg-black">
      <svg viewBox="365 208 885 383" preserveAspectRatio="xMinYMin slice" className="h-full w-full" role="img" aria-label="Sewer plan and profile drawing">
        <SitePlan />
        <ProfileGrid />
        <ViewCube />
        <path d="M377.500 532v42M382 578.500h41M373.500 574.500h8v8h-8zM378 515l6 6 6-6M384 521v6M429 566l11 12M440 566l-11 12" stroke="#ddd" strokeWidth="1.200" fill="none" />
      </svg>
      <SewerTable />
    </main>
  );
}

const target = <><circle cx="8" cy="8" r="3.500" /><path d="M8 1v4M8 11v4M1 8h4M11 8h4" /></>;

const sideTools: ReactNode[] = [
  <><path d="M1 1h13L8 7l-3 7z" fill="#b9cfe8" stroke="none" /><path d="M1 2h14M2 2l10 9" stroke="#ddd" /></>,
  <><path d="M1 1l8 4-5 6z" fill="#ddd" stroke="none" /><path d="M4 11L13 4M1 14h13" strokeDasharray="2 1" /></>,
  <><path d="M6 2l7 5v8L6 11z" fill="#b9cfe8" stroke="none" /><path d="M3 2v12" strokeDasharray="2 1" /></>,
  <><path d="M3 3l8 4-5 5z" fill="#ddd" stroke="none" /><path d="M3 2v13M6 12l8-9" strokeDasharray="2 1" /></>,
  <><path d="M2 1h7l3 3v9H2z" fill="#ddd" /><path d="M4 5h5M4 8h5" stroke="#555" /><rect x="9" y="9" width="6" height="6" fill="#999" /></>,
  <><circle cx="7" cy="7" r="6" fill="#6fc3bd" stroke="#9cc" /><path d="M4 4l3 3 3-4" /><rect x="9" y="9" width="6" height="6" fill="#999" /></>,
  <><circle cx="8" cy="8" r="6.500" fill="#999" /><path d="M8 1v14M1 8h14M4 3c-2 3-2 7 0 10M12 3c2 3 2 7 0 10" stroke="#eee" /></>,
  <>{target}<path d="M10 12h6M10 14h6M12 10v6M14 10v6" strokeWidth=".8" /></>,
  <>{target}<path d="M10 15l2.500-5 2.500 5M11 13.500h3" /></>,
  <>{target}<path d="M8 6l6 6-3 .5L9 15z" fill="#fff" /></>,
  <>{target}<circle cx="11" cy="11" r="3" fill="#ddd" /></>,
  <><path d="M2 1v13" strokeDasharray="2 1" /><path d="M6 10l4-8 5 2-4 8z" fill="#c8ccf0" /></>,
  <><path d="M1 4h14" stroke="#89a" strokeDasharray="2 1" /><path d="M7 2v13" stroke="#d4324a" strokeWidth="2" /><path d="M10 4c5 0 5 8 0 8" stroke="#8aa5b8" strokeWidth="1.500" /></>,
  null,
  <>{target}<path d="M15 9v6H9z" fill="#111" stroke="none" /><path d="M2 11l2 2 2-2z" fill="#ddd" /></>,
  null,
  <><path d="M1 3l8 8" stroke="#d4324a" strokeWidth="2" /><path d="M8 3c6 0 6 7 1 8M2 12h6" stroke="#9ab" /></>,
  <><path d="M2 5h7" stroke="#d4324a" strokeWidth="2" /><path d="M9 3c6 0 6 8 0 8M3 8v6" stroke="#bcc" /></>,
  <><path d="M3 2l5 6" stroke="#d4324a" strokeWidth="2" /><path d="M8 8v6M4 14h9M12 3v8" stroke="#bcc" /></>,
];

function SideTools() {
  return (
    <div className="flex w-[30px] shrink-0 flex-col items-center border-x-4 border-[#4a4a4a] bg-[#5a5a5a] pt-[2px]">
      <Svg w={14} h={6}><path d="M0 1h14M0 3.500h14" stroke="#222" strokeDasharray="1 1" /></Svg>
      {sideTools.map((t, i) => t
        ? <button key={i} aria-label={`Transparent command ${i + 1}`} className="flex h-[21px] items-center"><Svg w={16} h={16}><g stroke="#dcdcdc">{t}</g></Svg></button>
        : <hr key={i} className="my-[2px] h-[2px] w-[17px] border-0 bg-[#d0d0d0]" />)}
    </div>
  );
}

/* ---------- Command line and status bar ---------- */

function CommandLine() {
  return (
    <div className="flex h-[64px] border-t-[3px] border-[#4a4a4a] bg-[#4a4a4a]">
      <div className="flex w-[22px] shrink-0 flex-col items-center justify-between bg-gradient-to-b from-[#7c7c7c] to-[#454545] pb-[14px] pt-[3px]">
        <Svg w={16} h={5}><path d="M0 1h16M0 4h16" stroke="#bbb" strokeDasharray="1.500 1" /></Svg>
        <button aria-label="Close command line"><Svg w={9} h={9}><path d="M1 1l7 7M8 1L1 8" stroke="#fff" strokeWidth="1.800" /></Svg></button>
        <button aria-label="Customize"><Svg w={13} h={13}><path d="M2 1l3 3M1 2.500c-1 3 2 4 4 3l6 6" stroke="#eee" strokeWidth="2.500" /></Svg></button>
      </div>
      <div className="flex min-w-0 flex-1 flex-col font-['DejaVu_Sans_Mono'] text-[11px] leading-[14px]">
        <div className="h-[39px] bg-[#c8c8c8] pl-[2px] pt-[10px] text-[#1c1c1c]">
          <p className="whitespace-nowrap">Select an alignment &lt;or press enter</p>
          <p>Command:</p>
        </div>
        <div className="flex h-[21px] items-center bg-white pl-[5px]">
          <span className="flex h-[13px] w-[14px] items-center justify-center border border-[#999] bg-[#d9d9d9]"><Svg w={10} h={8}><path d="M1 1l3 3-3 3M5 7h4" stroke="#333" /></Svg></span>
          <Down className="ml-[3px] scale-75 text-[#777]" />
          <input aria-label="Command" placeholder="Type a command" className="ml-[5px] flex-1 bg-transparent italic outline-none placeholder:text-[#8a8a8a]" />
        </div>
      </div>
    </div>
  );
}

function Runner({ color }: { color: string }) {
  return <Svg w={15} h={16}><path d="M7 0l2 2v5l5 7h-3l-3-4-4 5H1l4-8V2z" fill={color} /><path d="M10 3h4" stroke={color} /></Svg>;
}

const cell = 'flex h-[25px] shrink-0 items-center justify-center border border-[#6c6c6c] bg-[#4b4b4b]';

function StatusBar() {
  return (
    <div className="flex h-[27px] items-start bg-[#393939] text-[11px] text-[#efefef]">
      <div className="flex w-[349px] shrink-0 items-start pl-[12px]">
        <button className="h-[18px] w-[52px] rounded-b-lg bg-gradient-to-b from-[#6e6e6e] to-[#8c8c8c] font-bold leading-[17px] text-white">Model</button>
        <button className="h-[18px] w-[62px] rounded-b-lg bg-[#535353] leading-[17px] text-[#c4c4c4]">Layout1</button>
        <button className="h-[18px] w-[61px] rounded-b-lg bg-[#535353] leading-[17px] text-[#c4c4c4]">Layout2</button>
        <button aria-label="New layout" className="ml-[3px] flex h-[18px] w-[22px] items-center justify-center rounded-b-lg bg-[#4c4c4c]"><Svg w={8} h={8}><path d="M4 0v8M0 4h8" stroke="#ccc" strokeWidth="1.800" /></Svg></button>
      </div>
      <div className={`${cell} w-[199px] whitespace-nowrap pl-1`}>1712225.1124, 1682251.8347, 0.0000</div>
      <button className={`${cell} w-[48px]`}>MODEL</button>
      <button aria-label="Grid" className={`${cell} w-[26px]`}><Svg w={13} h={15}><path d="M1.500 0v15M4.500 0v15M7.500 0v15M10.500 0v15" stroke="#ccc" /><path d="M0 2.500h13M0 7.500h13M0 12.500h13" stroke="#ccc" strokeDasharray="2 1" /></Svg></button>
      <div className="min-w-0 flex-1 self-stretch border-y border-[#5c5c5c] bg-[#4b4b4b]" />
      <div className={`${cell} w-[126px] gap-[8px] px-1`}>
        <Runner color="#3b8df0" /><Runner color="#c4c4c4" /><Runner color="#c4c4c4" />
        <button className="flex items-center gap-1 whitespace-nowrap">1" = 40'<Down /></button>
      </div>
      <button aria-label="Workspace switching" className={`${cell} w-[39px] gap-[8px]`}><GearIcon size={13} color="#d0d0d0" /><Down /></button>
      <button aria-label="Annotation monitor" className={`${cell} w-[24px]`}><Svg w={13} h={13}><path d="M6.500 0v13M0 6.500h13" stroke="#ddd" strokeWidth="1.500" /></Svg></button>
      <button aria-label="Isolate" className={`${cell} w-[25px]`}><Svg w={15} h={16}><path d="M1 1h6v5H1zM4 10l3 5H1z" stroke="#ccc" /><circle cx="11" cy="8" r="3" stroke="#ccc" /></Svg></button>
      <button aria-label="Performance" className={`${cell} w-[26px]`}><Svg w={16} h={16}><circle cx="8" cy="8" r="7" stroke="#aaa" /><path d="M5 5l4 4" stroke="#aaa" strokeWidth="1.500" /></Svg></button>
      <div className={`${cell} w-[73px] gap-[8px]`}>
        <Svg w={16} h={16}><path d="M8 1l7 4-7 4-7-4z" fill="#8fbf87" /><path d="M1 8l7 4 7-4v3l-7 4-7-4z" fill="#b9b9b9" /><circle cx="8" cy="7" r="3" fill="#4d8b46" /></Svg>
        3.5000
      </div>
      <div className={`${cell} w-[39px] gap-[5px]`}>
        <Svg w={14} h={15}><path d="M1 1h8v6H1z" fill="#3f78c6" /><path d="M4 5h8v6H4z" fill="#f0d24c" /><path d="M5 11l3 3 6-6" stroke="#7ddc4a" strokeWidth="2.500" /></Svg>
        <Svg w={14} h={14}><path d="M1 4h12v9H1zM5 4V1h5v3" stroke="#d2622a" strokeWidth="1.500" /></Svg>
      </div>
      <div className={`${cell} w-[51px] gap-[8px]`}>
        <Svg w={15} h={13}><path d="M1 1h13v11H1z" stroke="#ddd" /><path d="M8 3h4v4M7 10H3V6M3 10l3-3M12 3L9 6" stroke="#ddd" /></Svg>
        <Svg w={15} h={13}><path d="M0 1.500h15M0 6.500h15M0 11.500h15" stroke="#ccc" strokeWidth="1.500" /></Svg>
      </div>
    </div>
  );
}

/* ---------- Context menu ---------- */

type Item = { t: string; sub?: boolean; off?: boolean; on?: boolean; icon?: ReactNode; wide?: boolean };

const menuGroups: Item[][] = [
  [{ t: 'Repeat CREATEFEATURELINEFROMALIGN' }, { t: 'Recent Input', sub: true }],
  [{ t: 'Isolate Objects', sub: true }, { t: 'Clipboard', sub: true }],
  [{ t: 'Basic Modify Tools', sub: true }, { t: 'Display Order', sub: true }],
  [
    { t: 'Properties...', icon: <Svg w={13} h={13}><path d="M1 1h11v11H1z" fill="#e6e6e6" stroke="#555" /><path d="M3 3h4v3H3zM9 3v3M3 8.500h7M3 10.500h7" stroke="#444" /></Svg> },
    { t: 'Quick Select...', icon: <Svg w={15} h={15}><circle cx="6" cy="7" r="2.500" stroke="#444" /><path d="M0 7h3.500M6 1v3.500M6 9.500V14" stroke="#444" /><path d="M12 0L8 4h3l-2 4 5-5h-2l2-3z" fill="#e8b93a" /><path d="M9 8h6v7H9z" fill="#333" /><path d="M10 11.500h4M12 9v5" stroke="#ddd" strokeWidth=".7" /></Svg> },
  ],
  [{ t: 'Move to Site...' }, { t: 'Copy to Site...' }],
  [{ t: 'Edit Feature Line Style...' }, { t: 'Feature Line Properties...' }, { t: 'Remove Dynamic Link...', on: true }],
  [{ t: 'Quick Profile...' }],
  [{ t: 'Elevation Editor...' }, { t: 'Raise/Lower...', off: true }, { t: 'Reverse', off: true }, { t: 'Add to Surface as Breakline...' }],
  [{ t: 'Drive' }],
  [{ t: 'Object Viewer...', wide: true, icon: <Svg w={15} h={15}><path d="M1 1h12v13H1z" fill="#dfe6da" stroke="#333" /><path d="M3 4h5v8H3z" fill="#5d8f4a" stroke="#234" /><path d="M9 3l5 5-3 .5-2 3z" fill="#fff" stroke="#222" /></Svg> }],
  [{ t: 'Select Similar' }],
];

function ContextMenu() {
  return (
    <div role="menu" className="absolute left-[622px] top-[218px] z-10 w-[251px] border border-[#8e8e8e] bg-[#eeeeee] px-[2px] pb-[4px] text-[11px] text-[#1c1c1c] shadow-[3px_3px_3px_rgba(0,0,0,0.45)]">
      {menuGroups.map((g, gi) => (
        <div key={gi} className={gi ? 'mt-[4px] border-t border-[#a3a3a3] pt-[3px]' : ''}>
          {g.map((it) => (
            <button
              key={it.t}
              role="menuitem"
              disabled={it.off}
              className={`relative flex w-full items-center whitespace-nowrap ${it.wide ? 'h-[20px] pl-[22px]' : 'h-[18px] pl-[32px]'} ${it.on ? 'bg-[#3296f2] text-[#d9ecff]' : it.off ? 'text-[#a6a6a6]' : ''}`}
            >
              {it.icon && <span className={`absolute ${it.wide ? 'left-[2px]' : 'left-[18px]'}`}>{it.icon}</span>}
              {it.t}
              {it.sub && <Svg w={4} h={7} className="ml-auto mr-[6px]"><path d="M0 0l4 3.500L0 7z" fill="#111" /></Svg>}
            </button>
          ))}
        </div>
      ))}
      <div className="pointer-events-none absolute left-[17px] top-[254px] h-[50px] w-[50px] rounded-full bg-[#eeee3c]/50" />
      <Svg w={13} h={19} className="pointer-events-none absolute left-[38px] top-[270px]"><path d="M0 0l11 11H6.500l3 6-2.500 1.500-3-6.500L0 15z" fill="#15154a" /></Svg>
    </div>
  );
}

/* ---------- Taskbar ---------- */

function AppTile({ letter, color, tag, bg }: { letter: string; color: string; tag?: string; bg: string }) {
  return (
    <Svg w={30} h={32}>
      <rect x="2" y="1" width="26" height="30" fill={bg} />
      <path d={letter === 'A' ? 'M5 23L12 5h6l7 18-6-1-1-4h-6l-2 5zM15 10l-2 5h4z' : 'M7 5h5l6 10V5h5v19h-5l-6-10v10H7z'} fill={color} fillRule="evenodd" />
      <path d={letter === 'A' ? 'M12 5h3l-4 12-6 6z' : 'M7 5h3v19H7z'} fill="#000" fillOpacity=".25" />
      {tag && <text x="27" y="30" textAnchor="end" fontSize="7" fontWeight="700" fontFamily="Open Sans" fill={color}>{tag}</text>}
    </Svg>
  );
}

const apps: { name: string; active?: boolean; icon: ReactNode }[] = [
  { name: 'Internet Explorer', icon: <Svg w={30} h={30}><path d="M25 17H10c0 7 8 8 10 3h5c-3 10-20 10-20-3C5 3 25 3 25 17z" fill="#3aa5e4" stroke="#1b78ba" /><path d="M10.500 13.500c1-5 8-5 9 0z" fill="#b4c6cc" /><path d="M4 27C-3 21 17-2 26 3c2 1 0 5-1 7" stroke="#f2c231" strokeWidth="2.500" /></Svg> },
  { name: 'File Explorer', icon: <Svg w={30} h={30}><path d="M3 5h8l2 3h14v20H3z" fill="#e8cd6a" /><path d="M5 3h6v5H5z" fill="#5faa4d" /><path d="M13 4h7v4h-7z" fill="#f0eede" /><path d="M3 10h24v16H3z" fill="#f6e39b" /><path d="M6 28V17h18v11h-4v-6H10v6z" fill="#7cc0e8" stroke="#4a93c4" /></Svg> },
  { name: 'Chrome', active: true, icon: <Svg w={30} h={30}><circle cx="15" cy="15" r="13" fill="#f1c40f" /><path d="M3.700 8.500A13 13 0 0 1 26.500 9H15a6 6 0 0 0-5.500 3.500L8 16z" fill="#db4437" /><path d="M3.700 8.500A13 13 0 0 0 14 28l5-9a6 6 0 0 1-9-1z" fill="#259b56" /><circle cx="15" cy="15" r="6" fill="#f5f5f5" /><circle cx="15" cy="15" r="4.700" fill="#3f7ee8" /></Svg> },
  { name: 'Calculator', icon: <Svg w={24} h={30}><rect x="2" y="1" width="19" height="28" rx="2" fill="#b8d6ee" stroke="#5c8fba" /><path d="M4 4h15v8H4z" fill="#f0f6fb" stroke="#86a" strokeOpacity=".3" /><path d="M4.500 16h15M4.500 19.500h15M4.500 23h15M4.500 26.500h15" stroke="#3d77aa" strokeWidth="2.200" strokeDasharray="2.500 1.500" /><rect x="14" y="6" width="3" height="4" stroke="#333" /></Svg> },
  { name: 'Sticky Notes', icon: <Svg w={32} h={26}><path d="M3 3l12-2 2 13-12 2z" fill="#a9d96c" /><path d="M8 8l12-4 3 14-12 4z" fill="#8fc6ee" /><path d="M15 9l14-3 2 15-13 4z" fill="#f8de6a" /></Svg> },
  { name: 'AutoCAD', icon: <AppTile letter="A" color="#c11f2d" bg="#efc9cb" /> },
  { name: 'Navisworks Manage', icon: <AppTile letter="N" color="#138a4a" tag="m" bg="#d6ebe0" /> },
  { name: 'Civil 3D', active: true, icon: <AppTile letter="A" color="#1d6fb8" tag="C3D" bg="#e6eff6" /> },
  { name: 'Navisworks', icon: <AppTile letter="N" color="#2a9a55" bg="#c6e4cf" /> },
  { name: 'Civil 3D 2', icon: <AppTile letter="A" color="#1d6fb8" tag="C3D" bg="#e6eff6" /> },
  { name: 'Snipping Tool', icon: <Svg w={30} h={30}><ellipse cx="12" cy="10" rx="9" ry="8" fill="#f4f4f4" stroke="#c8383a" strokeWidth="2" /><path d="M7 6l14 15M17 5l-1 15" stroke="#9fa8ad" strokeWidth="2.500" /><circle cx="15" cy="24" r="3" stroke="#2b79b5" strokeWidth="2.500" /><circle cx="24" cy="22" r="3" stroke="#2b79b5" strokeWidth="2.500" /></Svg> },
  { name: 'Skype', active: true, icon: <Svg w={30} h={30}><circle cx="15" cy="15" r="12" fill="#15a8ea" /><circle cx="9" cy="8" r="7" fill="#15a8ea" /><circle cx="21" cy="22" r="7" fill="#15a8ea" /><path d="M20 10c-2-4-10-4-10 .5 0 5 10 3 10 8 0 5-9 5-11 0" stroke="#fff" strokeWidth="3" /></Svg> },
  { name: 'Recorder', active: true, icon: <Svg w={32} h={32}><rect x="3" y="2" width="26" height="21" rx="2" fill="#6d1e58" stroke="#f4f4f4" strokeWidth="1.500" /><path d="M13 24h6l2 5H9z" fill="#eee" /><circle cx="13" cy="7.500" r="2.500" fill="#fff" /><circle cx="18.500" cy="7.500" r="2.500" fill="#fff" /><path d="M10 11h10v7H10zM21 14l4-2v6l-4-2z" fill="#fff" /><circle cx="24" cy="25" r="5.500" fill="#ef3b34" /></Svg> },
];

function Taskbar() {
  return (
    <footer className="flex h-[38px] items-stretch bg-gradient-to-b from-[#a9aa9f] to-[#93948a]">
      <button aria-label="Start" className="flex w-[47px] shrink-0 items-center justify-center"><Svg w={27} h={27}><path d="M1 4.500l10-1.500v10H1zM12.500 2.800L26 1v12H12.500zM1 14.500h10v10L1 23zM12.500 14.500H26V27l-13.500-2z" fill="#fff" /></Svg></button>
      {apps.map((a) => (
        <button key={a.name} aria-label={a.name} className="flex w-[58px] shrink-0 px-[2px]">
          <span className={`flex h-full w-full items-center justify-center ${a.active ? 'border border-[#cfd0c9] bg-[#b4b5ac]' : ''}`}>{a.icon}</span>
        </button>
      ))}
      <div className="ml-auto flex items-center gap-[7px] pr-[10px] text-[11px] leading-[15px] text-white">
        <Svg w={8} h={5}><path d="M0 5l4-5 4 5z" fill="#fff" /></Svg>
        <Svg w={17} h={17} className="ml-1"><path d="M3 1v15" stroke="#fff" strokeWidth="2" /><path d="M4 2h9v7H4z" fill="#fff" stroke="#555" strokeWidth=".6" /><circle cx="11" cy="12" r="4.500" fill="#d6303a" /><path d="M9 10l4 4M13 10l-4 4" stroke="#fff" strokeWidth="1.300" /></Svg>
        <Svg w={14} h={16} className="ml-1"><path d="M4 3h7v12H4z" fill="#555" stroke="#fff" strokeWidth="1.500" /><path d="M6 1h3M6 7h3v6H6z" stroke="#fff" strokeWidth="1.500" /></Svg>
        <Svg w={15} h={14}><path d="M1 14v-3h2v3zM4 14V9h2v5zM7 14V7h2v7zM10 14V4h2v10zM13 14V1h2v13z" fill="#fff" /></Svg>
        <Svg w={15} h={15}><path d="M1 5h3l4-4v13l-4-4H1z" fill="#fff" /><path d="M10 5c1 1 1 4 0 5M12 3c2 2 2 7 0 9" stroke="#fff" /></Svg>
        <time className="ml-[6px] w-[60px] whitespace-nowrap text-center">11:16 AM<br />3/16/2018</time>
      </div>
    </footer>
  );
}

export default function App() {
  return (
    <div className="relative flex min-h-screen flex-col overflow-hidden bg-[#4a4a4a] font-['Open_Sans',sans-serif]">
      <header className="flex bg-[#4b4b4b]">
        <AppLogo />
        <div className="min-w-0 flex-1">
          <TitleBar />
          <MenuBar />
        </div>
      </header>
      <RibbonTabs />
      <Ribbon />
      <DrawingTabs />
      <PropertyBar />
      <div className="flex min-h-[446px] flex-1">
        <Toolspace />
        <div className="flex min-w-0 flex-1 flex-col">
          <div className="flex min-h-0 flex-1">
            <Canvas />
            <SideTools />
          </div>
          <CommandLine />
        </div>
      </div>
      <StatusBar />
      <Taskbar />
      <ContextMenu />
    </div>
  );
}
